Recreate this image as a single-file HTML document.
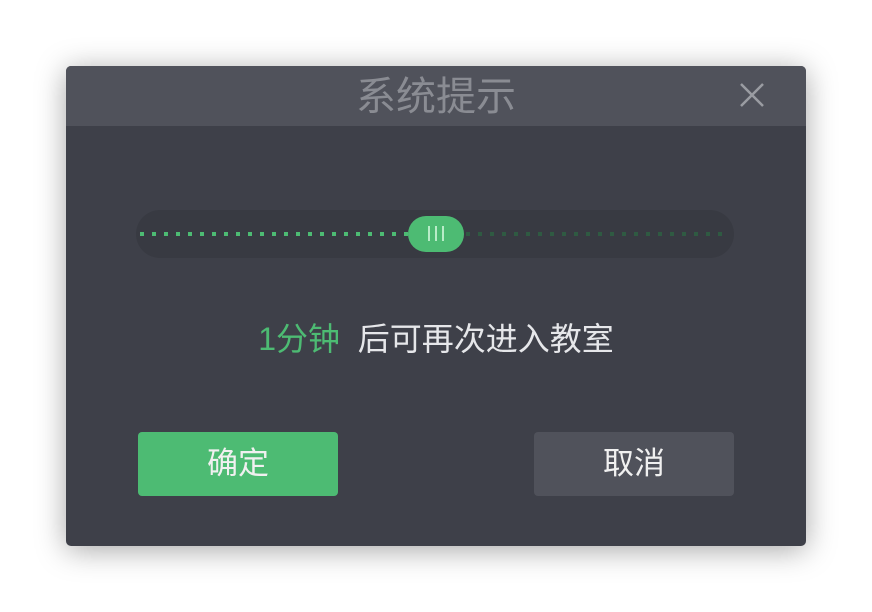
<!DOCTYPE html><html><head><meta charset="utf-8"><style>
body{margin:0;width:872px;height:612px;background:#fff;font-family:"Liberation Sans","Noto Sans CJK SC",sans-serif;position:relative;overflow:hidden}
.dlg{position:absolute;left:66px;top:66px;width:740px;height:480px;background:#3e4049;border-radius:5px;box-shadow:0 4px 30px rgba(0,0,0,.35);overflow:hidden}
.hd{height:60px;background:#50525b;text-align:center;color:#8a8c93;font-size:40px;line-height:62px}
.x{position:absolute;left:672px;top:15px}
.track{position:absolute;left:70px;top:144px;width:598px;height:48px;background:#383a42;border-radius:24px}
.dots{position:absolute;left:4px;top:22px;height:4px;width:590px;background-image:linear-gradient(90deg,#4dbb73 0,#4dbb73 4px,transparent 4px);background-size:12px 4px;background-repeat:repeat-x}
.dl{width:268px}
.dr{left:330px;width:262px;background-image:linear-gradient(90deg,#2f5a42 0,#2f5a42 4px,transparent 4px)}
.th{position:absolute;left:272px;top:6px;width:56px;height:36px;border-radius:18px;background:#4dbb73}
.th i{position:absolute;top:10px;width:2px;height:15px;background:#b8ecc8}
.msg{position:absolute;top:248px;width:100%;text-align:center;font-size:32px;color:#e6e7ea}
.btn{position:absolute;top:366px;width:200px;height:64px;border-radius:4px;font-size:31px;line-height:64px;text-align:center;color:#f0f0f0}
</style></head><body>
<div class="dlg">
<div class="hd">系统提示</div>
<svg class="x" width="28" height="28" viewBox="0 0 28 28"><path d="M3 3L25 25M25 3L3 25" stroke="#9a9ca2" stroke-width="2.5"/></svg>
<div class="track"><div class="dots dl"></div><div class="dots dr"></div>
<div class="th"><i style="left:20px"></i><i style="left:27px"></i><i style="left:34px"></i></div></div>
<div class="msg"><span style="color:#4dbb73">1分钟</span>&nbsp; 后可再次进入教室</div>
<div class="btn" style="left:72px;background:#4dbb73">确定</div>
<div class="btn" style="left:468px;background:#50525b">取消</div>
</div>
</body></html>
